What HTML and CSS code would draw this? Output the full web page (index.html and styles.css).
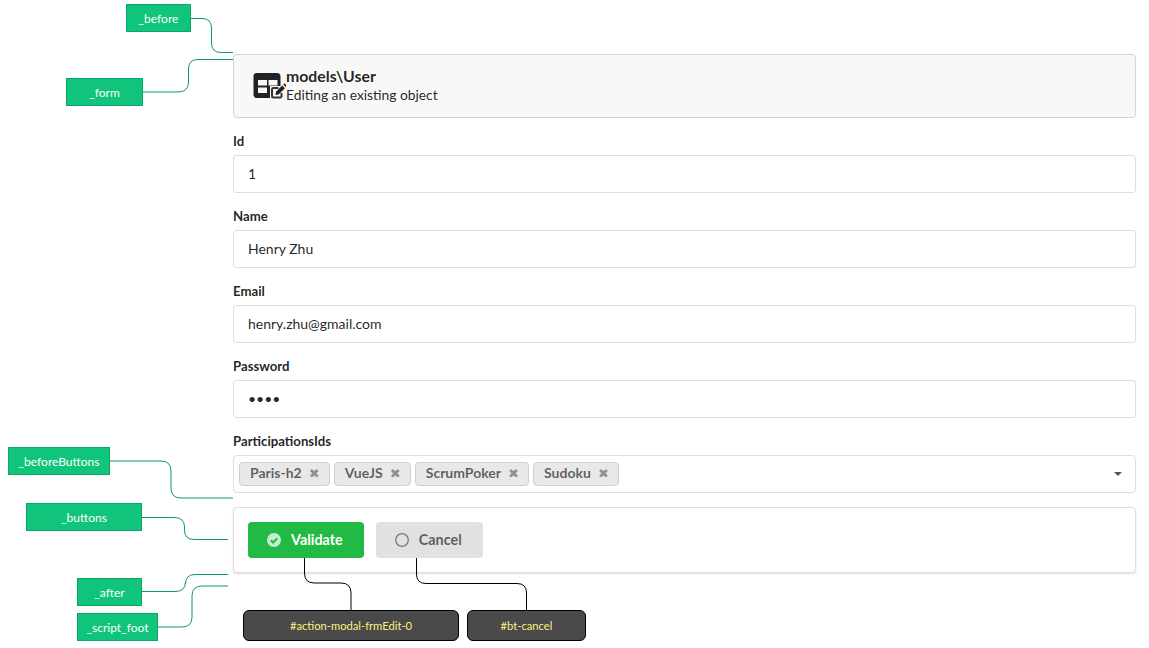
FILE: index.html
```html
<!DOCTYPE html>
<html lang="en">
<head>
  <meta charset="UTF-8">
  <title>models\User</title>
  <link rel="stylesheet" href="styles.css">
</head>
<body>
  <div class="page">
    <form class="edit-form">
      <div class="form-header">
        <svg class="header-icon" width="33" height="28" viewBox="0 0 33 28">
          <path fill="#222" fill-rule="evenodd" d="M4 0h20a3.500 3.500 0 0 1 3.500 3.500v18a3.500 3.500 0 0 1-3.500 3.500H4a3.500 3.500 0 0 1-3.500-3.500v-18A3.500 3.500 0 0 1 4 0zM5 7v5.500h9V7zM15.500 7v5.500h9V7zM5 14.500V20h9v-5.500z"/>
          <path fill="#f8f8f8" d="M17 13h16v15H17z"/>
          <path fill="none" stroke="#333" stroke-width="2" d="M28.500 20v3.300a1.200 1.200 0 0 1-1.200 1.200h-7.100a1.200 1.200 0 0 1-1.200-1.200v-7.100a1.200 1.200 0 0 1 1.200-1.200h5.300"/>
          <path fill="#222" d="M23 18.800l6.200-6.200 2.700 2.700-6.200 6.200-3.200.5zM30.200 11.600l.8-.8a.8.800 0 0 1 1.100 0l1.600 1.600a.8.800 0 0 1 0 1.100l-.8.800z"/>
        </svg>
        <div class="header-text">
          <div class="header-title">models\User</div>
          <div class="header-sub">Editing an existing object</div>
        </div>
      </div>

      <div class="field">
        <label>Id</label>
        <input type="text" value="1">
      </div>
      <div class="field">
        <label>Name</label>
        <input type="text" value="Henry Zhu">
      </div>
      <div class="field">
        <label>Email</label>
        <input type="text" value="henry.zhu@gmail.com">
      </div>
      <div class="field">
        <label>Password</label>
        <input type="password" value="1234">
      </div>
      <div class="field">
        <label>ParticipationsIds</label>
        <div class="dropdown">
          <a class="tag">Paris-h2<i class="tag-x">&#10006;</i></a>
          <a class="tag">VueJS<i class="tag-x">&#10006;</i></a>
          <a class="tag">ScrumPoker<i class="tag-x">&#10006;</i></a>
          <a class="tag">Sudoku<i class="tag-x">&#10006;</i></a>
          <span class="caret"></span>
        </div>
      </div>

      <div class="button-bar">
        <button type="button" class="btn btn-green">
          <svg class="btn-icon" width="14" height="14" viewBox="0 0 14 14">
            <circle cx="7" cy="7" r="7" fill="#c8eed2"/>
            <path fill="none" stroke="#21ba45" stroke-width="2" d="M3.800 7.200l2.300 2.300 4.200-4.300"/>
          </svg>
          Validate
        </button>
        <button type="button" class="btn btn-grey">
          <svg class="btn-icon" width="14" height="14" viewBox="0 0 14 14">
            <circle cx="7" cy="7" r="6.300" fill="none" stroke="#77787a" stroke-width="1.300"/>
          </svg>
          Cancel
        </button>
      </div>
    </form>
  </div>

  <!-- annotations drawn over the form -->
  <svg class="wires" width="1149" height="648" viewBox="0 0 1149 648">
    <g class="wire-green">
      <path d="M191 18.500H202Q211.500 18.500 211.500 28V43Q211.500 52.500 221 52.500H233"/>
      <path d="M143 92H178Q188.500 92 188.500 82V69Q188.500 59.500 198 59.500H233"/>
      <path d="M110 461H161Q171 461 171 471V488Q171 498 181 498H233"/>
      <path d="M142 517.500H174Q184.500 517.500 184.500 527V530Q184.500 539.500 194 539.500H228"/>
      <path d="M142 591.500H175Q185.500 591.500 185.500 582V584Q185.500 574.500 195 574.500H228"/>
      <path d="M158 627H182Q192 627 192 617V596Q192 586 202 586H228"/>
    </g>
    <g class="wire-dark">
      <path d="M304.500 558V573Q304.500 583 314 583H341Q351 583 351 593V610"/>
      <path d="M416.500 558V574Q416.500 583.500 426 583.500H517Q526.500 583.500 526.500 593V610"/>
    </g>
  </svg>
  <div class="note note-before">_before</div>
  <div class="note note-form">_form</div>
  <div class="note note-before-buttons">_beforeButtons</div>
  <div class="note note-buttons">_buttons</div>
  <div class="note note-after">_after</div>
  <div class="note note-script">_script_foot</div>
  <div class="target target-validate">#action-modal-frmEdit-0</div>
  <div class="target target-cancel">#bt-cancel</div>
</body>
</html>
```
FILE: styles.css
```css
html, body {
  margin: 0;
  padding: 0;
  background: #fff;
}
body {
  font-family: Lato, "Liberation Sans", sans-serif;
  font-size: 14px;
  color: rgba(0, 0, 0, 0.87);
  height: 648px;
  overflow: hidden;
  position: relative;
}
.page {
  padding: 54px 13px 0 233px;
}
.edit-form {
  display: flex;
  flex-direction: column;
  gap: 14px;
}

/* header */
.form-header {
  display: flex;
  align-items: center;
  height: 64px;
  box-sizing: border-box;
  padding: 0 19px;
  background: #f8f8f8;
  border: 1px solid #d4d4d5;
  border-radius: 4px;
}
.header-icon {
  flex: none;
  margin-top: 2px;
}
.header-text {
  margin-bottom: 2px;
}
.header-title {
  font-size: 15.800px;
  font-weight: 700;
  line-height: 18px;
}
.header-sub {
  font-size: 13.800px;
  line-height: 19px;
}

/* fields */
.field label {
  display: block;
  font-size: 13.200px;
  font-weight: 700;
  line-height: 19px;
  margin-bottom: 4px;
}
.field input {
  display: block;
  width: 100%;
  height: 38px;
  box-sizing: border-box;
  padding: 0 14px 2px;
  border: 1px solid rgba(34, 36, 38, 0.15);
  border-radius: 4px;
  background: #fff;
  font-family: inherit;
  font-size: 14px;
  color: rgba(0, 0, 0, 0.87);
}
.dropdown {
  display: flex;
  align-items: center;
  gap: 4px;
  height: 38px;
  box-sizing: border-box;
  padding: 0 5px;
  border: 1px solid rgba(34, 36, 38, 0.15);
  border-radius: 4px;
}
.tag {
  display: inline-flex;
  align-items: center;
  height: 24px;
  box-sizing: border-box;
  padding: 0 10px 3px;
  background: #e8e8e8;
  border: 1px solid #d0d0d0;
  border-radius: 4px;
  font-size: 14px;
  font-weight: 700;
  color: rgba(0, 0, 0, 0.6);
}
.tag-x {
  width: 10px;
  margin-left: 7px;
  font-style: normal;
  font-size: 13px;
  line-height: 24px;
  margin-bottom: -3px;
  color: rgba(0, 0, 0, 0.4);
  font-family: "DejaVu Sans", sans-serif;
}
.caret {
  margin-left: auto;
  margin-right: 8px;
  margin-bottom: 1px;
  border-left: 4px solid transparent;
  border-right: 4px solid transparent;
  border-top: 4px solid #555;
}

/* buttons */
.button-bar {
  display: flex;
  gap: 12px;
  padding: 14px;
  height: 66px;
  box-sizing: border-box;
  border: 1px solid rgba(34, 36, 38, 0.15);
  border-radius: 4px;
  box-shadow: 0 1px 2px rgba(34, 36, 38, 0.15);
}
.btn {
  display: flex;
  align-items: center;
  height: 36px;
  border: 0;
  border-radius: 4px;
  padding: 0 21px 2px 19px;
  font-family: inherit;
  font-size: 14.400px;
  font-weight: 700;
}
.btn-icon {
  margin-right: 10px;
  margin-bottom: -2px;
}
.btn-green {
  background: #21ba45;
  color: #fff;
}
.btn-grey {
  background: #e0e1e2;
  color: rgba(0, 0, 0, 0.6);
}

/* annotation layer */
.wires {
  position: absolute;
  left: 0;
  top: 0;
  pointer-events: none;
}
.wires path {
  fill: none;
  stroke-width: 1;
}
.wire-green path {
  stroke: #0d9b63;
}
.wire-dark path {
  stroke: #000;
}
.note {
  position: absolute;
  height: 28px;
  box-sizing: border-box;
  background: #10c47b;
  border: 1px solid #0da568;
  color: #fff;
  font-size: 12px;
  line-height: 28px;
  text-align: center;
}
.note-before { left: 126px; top: 4px; width: 65px; }
.note-form { left: 66px; top: 78px; width: 77px; }
.note-before-buttons { left: 8px; top: 447px; width: 102px; }
.note-buttons { left: 26px; top: 503px; width: 116px; }
.note-after { left: 77px; top: 578px; width: 65px; }
.note-script { left: 77px; top: 613px; width: 81px; }
.target {
  position: absolute;
  top: 610px;
  height: 31px;
  box-sizing: border-box;
  background: #4a4a4a;
  border: 1px solid #000;
  border-radius: 6px;
  color: #ffee80;
  font-size: 11.200px;
  line-height: 29px;
  text-align: center;
}
.target-validate { left: 243px; width: 216px; }
.target-cancel { left: 467px; width: 119px; }
```
